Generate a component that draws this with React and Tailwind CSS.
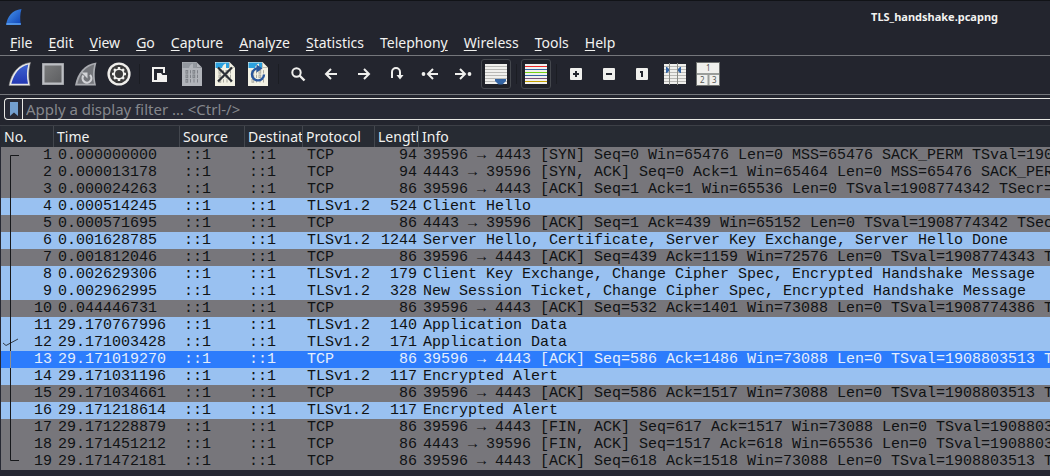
import React from "react";

const MENUS = [
  ["", "F", "ile"],
  ["", "E", "dit"],
  ["", "V", "iew"],
  ["", "G", "o"],
  ["", "C", "apture"],
  ["", "A", "nalyze"],
  ["", "S", "tatistics"],
  ["Telephon", "y", ""],
  ["", "W", "ireless"],
  ["", "T", "ools"],
  ["", "H", "elp"],
];

const PACKETS = [
  [1, "0.000000000", "TCP", 94, "39596 → 4443 [SYN] Seq=0 Win=65476 Len=0 MSS=65476 SACK_PERM TSval=1908774342 TSecr=0"],
  [2, "0.000013178", "TCP", 94, "4443 → 39596 [SYN, ACK] Seq=0 Ack=1 Win=65464 Len=0 MSS=65476 SACK_PERM TSval=1908774342"],
  [3, "0.000024263", "TCP", 86, "39596 → 4443 [ACK] Seq=1 Ack=1 Win=65536 Len=0 TSval=1908774342 TSecr=1908774342"],
  [4, "0.000514245", "TLSv1.2", 524, "Client Hello"],
  [5, "0.000571695", "TCP", 86, "4443 → 39596 [ACK] Seq=1 Ack=439 Win=65152 Len=0 TSval=1908774342 TSecr=1908774342"],
  [6, "0.001628785", "TLSv1.2", 1244, "Server Hello, Certificate, Server Key Exchange, Server Hello Done"],
  [7, "0.001812046", "TCP", 86, "39596 → 4443 [ACK] Seq=439 Ack=1159 Win=72576 Len=0 TSval=1908774343 TSecr=1908774343"],
  [8, "0.002629306", "TLSv1.2", 179, "Client Key Exchange, Change Cipher Spec, Encrypted Handshake Message"],
  [9, "0.002962995", "TLSv1.2", 328, "New Session Ticket, Change Cipher Spec, Encrypted Handshake Message"],
  [10, "0.044446731", "TCP", 86, "39596 → 4443 [ACK] Seq=532 Ack=1401 Win=73088 Len=0 TSval=1908774386 TSecr=1908774344"],
  [11, "29.170767996", "TLSv1.2", 140, "Application Data"],
  [12, "29.171003428", "TLSv1.2", 171, "Application Data"],
  [13, "29.171019270", "TCP", 86, "39596 → 4443 [ACK] Seq=586 Ack=1486 Win=73088 Len=0 TSval=1908803513 TSecr=1908803513"],
  [14, "29.171031196", "TLSv1.2", 117, "Encrypted Alert"],
  [15, "29.171034661", "TCP", 86, "39596 → 4443 [ACK] Seq=586 Ack=1517 Win=73088 Len=0 TSval=1908803513 TSecr=1908803513"],
  [16, "29.171218614", "TLSv1.2", 117, "Encrypted Alert"],
  [17, "29.171228879", "TCP", 86, "39596 → 4443 [FIN, ACK] Seq=617 Ack=1517 Win=73088 Len=0 TSval=1908803513 TSecr=1908803513"],
  [18, "29.171451212", "TCP", 86, "4443 → 39596 [FIN, ACK] Seq=1517 Ack=618 Win=65536 Len=0 TSval=1908803513 TSecr=1908803513"],
  [19, "29.171472181", "TCP", 86, "39596 → 4443 [ACK] Seq=618 Ack=1518 Win=73088 Len=0 TSval=1908803513 TSecr=1908803513"],
];

const SELECTED = 13;

function Icon({ children, size = 24, className = "" }) {
  return (
    <svg width={size} height={size} viewBox={`0 0 ${size} ${size}`} fill="none" aria-hidden="true" className={`shrink-0 ${className}`}>
      {children}
    </svg>
  );
}

const StartIcon = () => (
  <Icon>
    <defs>
      <linearGradient id="fin" x1="0" y1="0" x2="0" y2="1">
        <stop offset="0" stopColor="#3d62d0" />
        <stop offset="1" stopColor="#2439b4" />
      </linearGradient>
    </defs>
    <path d="M1 23.500C3.500 11 10 2 22.500 .5C20.500 7 20 15 22 23.500Z" fill="#e9e9e6" stroke="#8c8c8c" strokeWidth=".6" />
    <path d="M3.300 21.800C6 11.500 11.500 4.300 20.300 2.400C18.600 8.500 18.500 15 20 21.800Z" fill="url(#fin)" />
  </Icon>
);

const StopIcon = () => (
  <Icon>
    <defs>
      <linearGradient id="stop" x1="0" y1="0" x2="1" y2="1">
        <stop offset="0" stopColor="#7b7c7d" />
        <stop offset="1" stopColor="#5c5d60" />
      </linearGradient>
    </defs>
    <rect x="1" y="1" width="22" height="22" fill="#8a8c90" />
    <rect x="2.500" y="2.500" width="19" height="19" fill="url(#stop)" stroke="#bcbec3" strokeWidth="2" />
  </Icon>
);

const RestartIcon = () => (
  <Icon>
    <path d="M1 23.500C3.500 11 10 2 22.500 .5C20.500 7 20 15 22 23.500Z" fill="#a9abb0" />
    <path d="M3.300 21.800C6 11.500 11.500 4.300 20.300 2.400C18.600 8.500 18.500 15 20 21.800Z" fill="#74767b" />
    <path d="M9.500 13.500A4.400 4.400 0 1 0 16 13" stroke="#d2d3d7" strokeWidth="2.200" />
    <path d="M7.500 10.500H13.500V16.500Z" fill="#d2d3d7" />
  </Icon>
);

const TEETH = [0, 45, 90, 135, 180, 225, 270, 315];
const OptionsIcon = () => (
  <Icon>
    <circle cx="12" cy="12" r="11.600" fill="#efeeeb" />
    <circle cx="12" cy="12" r="9.200" fill="#3a3a3a" />
    <g fill="#f2f2ef">
      {TEETH.map((a) => (
        <rect key={a} x="10.800" y="5" width="2.400" height="3" transform={`rotate(${a} 12 12)`} />
      ))}
      <circle cx="12" cy="12" r="5.600" />
    </g>
    <circle cx="12" cy="12" r="4" fill="#3a3a3a" />
  </Icon>
);

const OpenIcon = () => (
  <Icon>
    <path d="M10 19H6V6H17V11" stroke="#f2f1ef" strokeWidth="2" />
    <path d="M10 11H14L15.500 13H20V20H10Z" fill="#f2f1ef" />
  </Icon>
);

function FileSheet({ paper, fold, ink, children }) {
  return (
    <Icon>
      <path d="M2 0H16.500L22 5.500V24H2Z" fill={paper} />
      <path d="M2.500 .5H16V6H2.500Z" fill={fold} />
      <path d="M9 6C9.500 3.500 11 2 13 1.500V6Z" fill={paper} />
      <path d="M16.500 .5V5.500H21.500" stroke={ink} strokeWidth=".7" />
      <g stroke={ink} strokeWidth="1">
        {[8.5, 13, 17.5].map((y, row) => (
          <React.Fragment key={y}>
            {[6, 9.5, 13, 16.5].map((x, col) =>
              (row === 2 ? col === 0 : col % 2 === 0) ? (
                <rect key={x} x={x} y={y} width="1.700" height="2.700" />
              ) : (
                <path key={x} d={`M${x + 1} ${y - 0.3}v3.300`} />
              )
            )}
          </React.Fragment>
        ))}
      </g>
      {children}
    </Icon>
  );
}

const SaveIcon = () => <FileSheet paper="#b1b4ba" fold="#93989f" ink="#7e8188" />;
const CloseIcon = () => (
  <FileSheet paper="#f3f2e4" fold="#2ca1df" ink="#a9a99f">
    <path d="M5 5.500L19 19.500M19 5.500L5 19.500" stroke="#2b2f35" strokeWidth="2.200" />
  </FileSheet>
);
const ReloadIcon = () => (
  <FileSheet paper="#f3f2e4" fold="#2ca1df" ink="#a9a99f">
    <path d="M13 6.500A6 6 0 1 0 18 12.500" stroke="#28569c" strokeWidth="2.400" />
    <path d="M10.500 2.500L16.500 6.500L10.500 10.500Z" fill="#28569c" />
  </FileSheet>
);

const LINE = { stroke: "#efefed", strokeWidth: 2 };
const FindIcon = () => (
  <Icon>
    <circle cx="10.500" cy="10.500" r="4.200" {...LINE} />
    <path d="M13.500 13.500L18.500 18.500" {...LINE} strokeWidth="2.400" />
  </Icon>
);
const BackIcon = () => (
  <Icon>
    <path d="M18 12H7.500M12 7L7 12L12 17" {...LINE} />
  </Icon>
);
const ForwardIcon = () => (
  <Icon>
    <path d="M6 12H16.500M12 7L17 12L12 17" {...LINE} />
  </Icon>
);
const GotoIcon = () => (
  <Icon>
    <path d="M7 16V10A4 4 0 0 1 15 10V14" {...LINE} />
    <path d="M11.500 13H18.500L15 17.500Z" fill="#efefed" />
  </Icon>
);
const FirstIcon = () => (
  <Icon>
    <circle cx="5.500" cy="12" r="1.900" fill="#efefed" />
    <path d="M20 12H10.500M15 7L10 12L15 17" {...LINE} />
  </Icon>
);
const LastIcon = () => (
  <Icon>
    <circle cx="18.500" cy="12" r="1.900" fill="#efefed" />
    <path d="M4 12H13.500M9 7L14 12L9 17" {...LINE} />
  </Icon>
);

function StripedSheet({ colors, children }) {
  return (
    <Icon>
      <rect x="1" y="2" width="22" height="20" fill="#f0f0ed" />
      {colors.map((color, i) => (
        <rect key={i} x="1" y={4 + i * 3} width="22" height="1" fill={color} />
      ))}
      {children}
    </Icon>
  );
}

const GRAYS = ["#b9b9b6", "#b9b9b6", "#b9b9b6", "#b9b9b6", "#b9b9b6", "#b9b9b6"];
const HUES = ["#ef2929", "#3465a4", "#73d216", "#3465a4", "#75507b", "#c4a000"];

const AutoScrollIcon = () => (
  <StripedSheet colors={GRAYS}>
    <path d="M11 17H22V19L18.500 22.500H14.500L11 19Z" fill="#3465a4" />
  </StripedSheet>
);
const ColorizeIcon = () => <StripedSheet colors={HUES} />;

const ZoomInIcon = () => (
  <Icon>
    <rect x="6" y="6" width="12" height="12" rx="1" fill="#f0f0ed" />
    <path d="M9 12H15M12 9V15" stroke="#23262e" strokeWidth="2" />
  </Icon>
);
const ZoomOutIcon = () => (
  <Icon>
    <rect x="6" y="6" width="12" height="12" rx="1" fill="#f0f0ed" />
    <path d="M9 12H15" stroke="#23262e" strokeWidth="2" />
  </Icon>
);
const ZoomResetIcon = () => (
  <Icon>
    <rect x="6" y="6" width="12" height="12" rx="1" fill="#f0f0ed" />
    <path d="M10 10H12V15" stroke="#23262e" strokeWidth="2" />
  </Icon>
);
const ResizeIcon = () => (
  <StripedSheet colors={GRAYS}>
    <path d="M6.500 1V23M14.500 1V23" stroke="#888a85" />
    <path d="M3 5H4L6 7V9L4 11H3ZM18 5H17L15 7V9L17 11H18Z" fill="#3465a4" />
  </StripedSheet>
);
const LayoutIcon = () => (
  <Icon>
    <rect x=".5" y=".5" width="23" height="23" fill="#f0f0ed" stroke="#6f7270" />
    <path d="M1 12H23M12.500 12V23" stroke="#9a9d9a" strokeWidth="2" />
    <g fill="#555753" fontFamily="Noto Sans, sans-serif" fontSize="8">
      <text x="10" y="9">1</text>
      <text x="4" y="21">2</text>
      <text x="16" y="21">3</text>
    </g>
  </Icon>
);

const TOOL_GROUPS = [
  [
    ["Start capture", StartIcon],
    ["Stop capture", StopIcon],
    ["Restart capture", RestartIcon],
    ["Capture options", OptionsIcon],
  ],
  [
    ["Open file", OpenIcon],
    ["Save file", SaveIcon],
    ["Close file", CloseIcon],
    ["Reload file", ReloadIcon],
  ],
  [
    ["Find packet", FindIcon],
    ["Previous packet", BackIcon],
    ["Next packet", ForwardIcon],
    ["Go to packet", GotoIcon],
    ["First packet", FirstIcon],
    ["Last packet", LastIcon],
    ["Auto scroll", AutoScrollIcon, true],
  ],
  [["Colorize", ColorizeIcon, true]],
  [
    ["Zoom in", ZoomInIcon],
    ["Zoom out", ZoomOutIcon],
    ["Normal size", ZoomResetIcon],
    ["Resize columns", ResizeIcon],
    ["Reset layout", LayoutIcon],
  ],
];

function ToolButton({ label, Glyph, pressed }) {
  return (
    <button
      type="button"
      aria-label={label}
      aria-pressed={pressed}
      className={
        pressed
          ? "flex size-[30px] items-center justify-center rounded-[3px] border border-[#45484e] bg-[#1f2128]"
          : "flex size-[30px] items-center justify-center"
      }
    >
      <Glyph />
    </button>
  );
}

function rowTone(no, protocol) {
  if (no === SELECTED) return "bg-[#2c7cfc] text-[#e4eefc]";
  return protocol === "TCP" ? "bg-[#77767b] text-[#101214]" : "bg-[#99c1f1] text-[#101214]";
}

function ConversationMark({ no }) {
  let path = "M9.500 0V17";
  if (no === 1) path = "M9.500 17V8.500H18";
  if (no === 19) path = "M9.500 0V7.500H18";
  return (
    <svg width="20" height="17" fill="none" stroke={no === SELECTED ? "#8d8f90" : "#16181b"} aria-hidden="true" className="shrink-0">
      <path d={path} />
      {no === 12 && <path d="M2 9L5 11.500L17 5" strokeWidth=".8" />}
    </svg>
  );
}

const HEAD = "overflow-hidden border-r border-[#43474e] p-0 pl-[3px] text-left align-middle font-normal whitespace-nowrap";
const CELL = "overflow-hidden p-0 pl-1 whitespace-pre";

export default function App() {
  return (
    <div className="flex min-h-screen flex-col overflow-hidden bg-[#262833] font-['Noto_Sans',sans-serif] text-[15px] text-[#f2f2f0]">
      <header className="flex h-[33px] items-center justify-between border-t border-[#111317] bg-[#23252e] pr-[52px] pl-[6px]">
        <Icon size={16}>
          <defs>
            <linearGradient id="logo" x1="0" y1="0" x2="1" y2="1">
              <stop offset="0" stopColor="#4d9bef" />
              <stop offset="1" stopColor="#0b3fb4" />
            </linearGradient>
          </defs>
          <path d="M0 16C1.500 7.500 6 1 15.500 0C14 5 13.800 10 15 16Z" fill="url(#logo)" />
          <path d="M.5 15H14.800" stroke="#5fa3ee" strokeWidth="1.600" />
        </Icon>
        <h1 className="text-[11px] leading-4 font-bold">TLS_handshake.pcapng</h1>
      </header>

      <nav className="flex h-[23px] items-center gap-4 border-b border-[#75777c] bg-[#23252e] px-[10px] pb-[2px] text-sm">
        {MENUS.map(([before, key, after]) => (
          <button type="button" key={before + key + after} className="leading-5">
            {before}
            <span className="underline decoration-1 underline-offset-2">{key}</span>
            {after}
          </button>
        ))}
      </nav>

      <div role="toolbar" aria-label="Main toolbar" className="flex h-[39px] items-center gap-[3px] border-b border-[#75777c] bg-[#23252e] pb-[2px] pl-[5px]">
        {TOOL_GROUPS.map((group, i) => (
          <React.Fragment key={i}>
            {i > 0 && (
              <span className="flex w-1 justify-center">
                <span className="h-5 w-px bg-[#1b1d23]" />
              </span>
            )}
            {group.map(([label, Glyph, pressed]) => (
              <ToolButton key={label} label={label} Glyph={Glyph} pressed={pressed} />
            ))}
          </React.Fragment>
        ))}
      </div>

      <div className="bg-[#23252e] pt-[3px] pb-[5px] pl-1">
        <div className="flex h-[22px] rounded-l-sm border border-r-0 border-[#e8e8e4] bg-[#272934]">
          <button type="button" aria-label="Filter bookmarks" className="flex w-[18px] items-center justify-center border-r border-[#e8e8e4]">
            <svg width="8" height="14" viewBox="0 0 8 14" aria-hidden="true">
              <path d="M0 0H8V14L4 10.500L0 14Z" fill="#729fcf" />
            </svg>
          </button>
          <input
            type="text"
            aria-label="Display filter"
            placeholder="Apply a display filter … &lt;Ctrl-/&gt;"
            className="min-w-0 flex-1 bg-transparent px-[3px] leading-5 outline-none placeholder:text-[#85878c]"
          />
        </div>
      </div>

      <div className="overflow-hidden border-t border-[#3d4047] pl-px">
        <table className="w-full table-fixed border-separate border-spacing-0">
          <colgroup>
            <col className="w-[53px]" />
            <col className="w-[126px]" />
            <col className="w-[65px]" />
            <col className="w-[58px]" />
            <col className="w-[72px]" />
            <col className="w-[44px]" />
            <col />
          </colgroup>
          <thead className="bg-[#272b33] text-sm leading-5">
            <tr className="h-[21px]">
              {["No.", "Time", "Source", "Destination", "Protocol", "Length"].map((name) => (
                <th key={name} scope="col" className={HEAD}>
                  {name}
                </th>
              ))}
              <th scope="col" className="p-0 pl-[3px] text-left align-middle font-normal">
                Info
              </th>
            </tr>
          </thead>
          <tbody className="font-['Liberation_Mono',monospace] leading-[17px]">
            {PACKETS.map(([no, time, protocol, length, info]) => (
              <tr key={no} className={`h-[17px] ${rowTone(no, protocol)}`}>
                <td className="p-0 pr-[2px]">
                  <div className="flex h-[17px] justify-between">
                    <ConversationMark no={no} />
                    {no}
                  </div>
                </td>
                <td className={CELL}>{time}</td>
                <td className={CELL}>::1</td>
                <td className={CELL}>::1</td>
                <td className={CELL}>{protocol}</td>
                <td className="overflow-hidden p-0 pr-[2px] text-right">{length}</td>
                <td className={CELL}>{info}</td>
              </tr>
            ))}
          </tbody>
        </table>
      </div>
    </div>
  );
}
